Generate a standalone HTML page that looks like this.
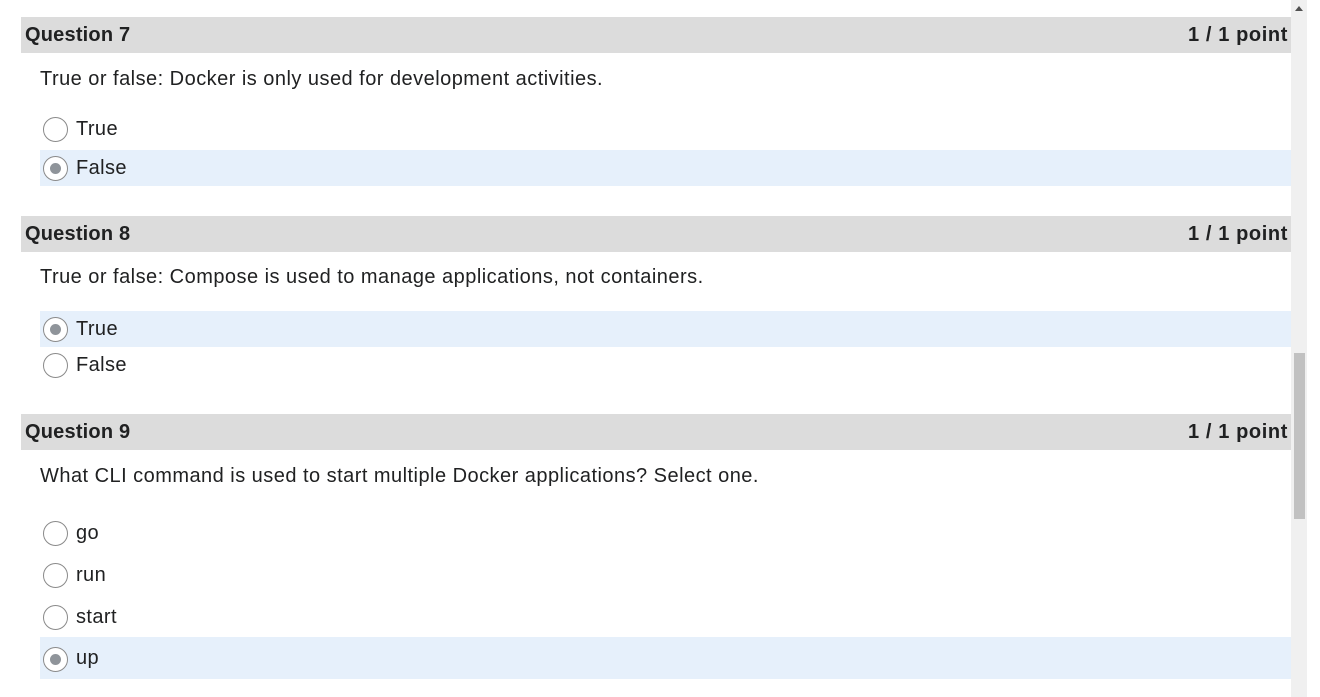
<!DOCTYPE html>
<html><head><style>
body{margin:0;width:1320px;height:697px;overflow:hidden;background:#fff;font-family:"Liberation Sans",sans-serif;color:#202122;position:relative}
.h{position:absolute;left:21px;width:1270px;height:36px;background:#dcdcdc;font-weight:bold;font-size:20px;line-height:36px;letter-spacing:0.2px}
.h span{position:absolute;left:4px;top:0px}.h b{position:absolute;right:3px;top:0px;letter-spacing:0.6px}
.t{position:absolute;left:40px;font-size:20px;line-height:24px;letter-spacing:0.47px}
.o{position:absolute;left:40px;width:1251px;font-size:20px;line-height:36px;height:36px;letter-spacing:0.4px}
.o.s{background:#e6f0fb}
.r{position:absolute;left:3px;top:6px;width:25px;height:25px;border:1px solid #8a8a8a;border-radius:50%;box-sizing:border-box;background:#fff}
.s .r::after{content:"";position:absolute;left:6px;top:6px;width:11px;height:11px;border-radius:50%;background:#8f949a}
.o span{position:absolute;left:36px;top:0px}
.sb{position:absolute;left:1291px;top:0;width:16px;height:697px;background:#f0f0f0}
.th{position:absolute;left:1294px;top:353px;width:11px;height:166px;background:#c1c1c1}
.ar{position:absolute;left:1295px;top:6px;width:0;height:0;border-left:4px solid transparent;border-right:4px solid transparent;border-bottom:5px solid #505050}
</style></head><body>
<div class="sb"></div><div class="th"></div><div class="ar"></div>
<div class="h" style="top:17px"><span>Question 7</span><b>1 / 1 point</b></div>
<div class="t" style="top:67px">True or false: Docker is only used for development activities.</div>
<div class="o" style="top:111px"><div class="r"></div><span>True</span></div>
<div class="o s" style="top:150px"><div class="r"></div><span>False</span></div>
<div class="h" style="top:216px"><span>Question 8</span><b>1 / 1 point</b></div>
<div class="t" style="top:265px">True or false: Compose is used to manage applications, not containers.</div>
<div class="o s" style="top:311px"><div class="r"></div><span>True</span></div>
<div class="o" style="top:347px"><div class="r"></div><span>False</span></div>
<div class="h" style="top:414px"><span>Question 9</span><b>1 / 1 point</b></div>
<div class="t" style="top:464px">What CLI command is used to start multiple Docker applications? Select one.</div>
<div class="o" style="top:515px"><div class="r"></div><span>go</span></div>
<div class="o" style="top:557px"><div class="r"></div><span>run</span></div>
<div class="o" style="top:599px"><div class="r"></div><span>start</span></div>
<div class="o s" style="top:637px;height:42px;line-height:42px"><div class="r" style="top:10px"></div><span>up</span></div>
</body></html>
